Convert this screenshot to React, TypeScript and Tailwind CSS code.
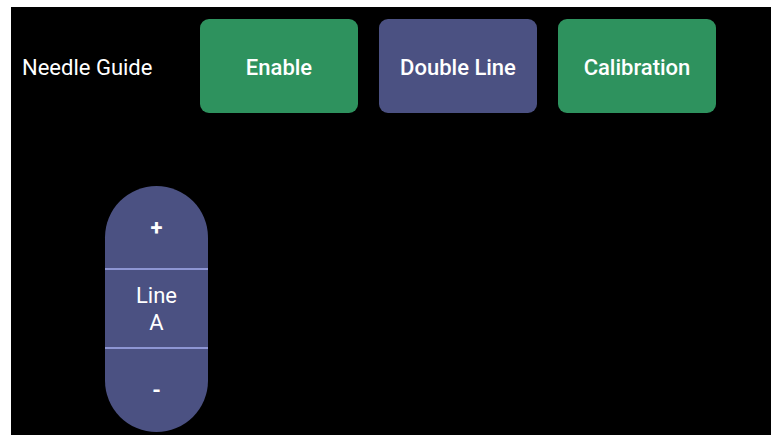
const BTN = "flex h-[94px] w-[158px] items-center justify-center rounded-[9px] pt-[3px] text-[22px] font-medium text-white";

export default function App() {
  return (
    <div className="h-[435px] w-[771px] overflow-hidden bg-white pl-[11px] pt-[7px] font-['Roboto',sans-serif]">
      <div className="flex h-full w-full flex-col bg-black">
        <div className="flex items-center pt-[12px]">
          <span className="w-[189px] pl-[11px] pt-[3px] text-[22px] text-white">Needle Guide</span>
          <div className="flex gap-[21px]">
            <button className={`${BTN} bg-[#2e925e]`}>Enable</button>
            <button className={`${BTN} bg-[#4b5182]`}>Double Line</button>
            <button className={`${BTN} bg-[#2e925e]`}>Calibration</button>
          </div>
        </div>

        <div className="ml-[94px] mt-[73px] flex h-[246px] w-[103px] flex-col overflow-hidden rounded-full bg-[#4b5182] text-white">
          <button className="flex h-[82px] items-center justify-center text-[22px] font-bold">+</button>
          <div className="h-[2px] bg-[#8e96d4]" />
          <div className="flex h-[77px] flex-col items-center justify-center text-[22px] leading-[27px]">
            <span>Line</span>
            <span>A</span>
          </div>
          <div className="h-[2px] bg-[#8e96d4]" />
          <button className="flex flex-1 items-center justify-center text-[22px] font-bold">-</button>
        </div>
      </div>
    </div>
  );
}
